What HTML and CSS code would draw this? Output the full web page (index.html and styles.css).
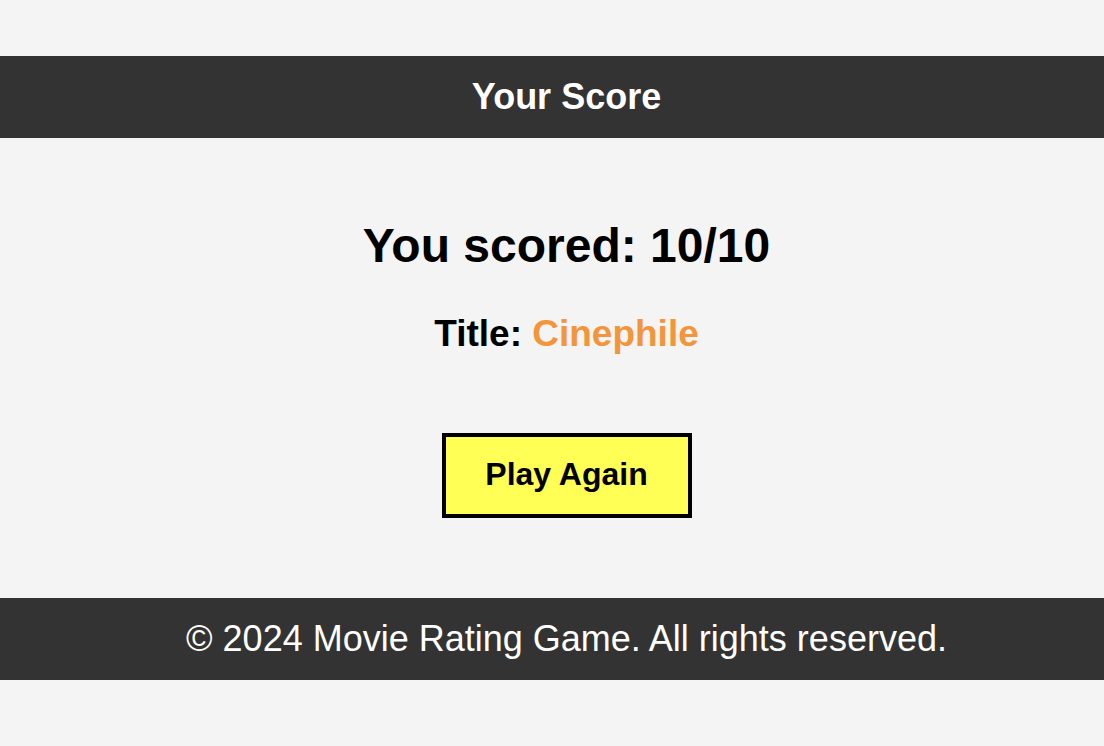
FILE: index.html
```html
<!DOCTYPE html>
<html lang="en">
<head>
<meta charset="utf-8">
<title>Your Score</title>
<link rel="stylesheet" href="styles.css">
</head>
<body>
<div class="page">
  <header class="bar top-bar">
    <h1 class="bar-title">Your Score</h1>
  </header>
  <main class="result">
    <h2 class="score">You scored: 10/10</h2>
    <p class="rank">Title: <span class="rank-name">Cinephile</span></p>
    <button class="play-btn" type="button">Play Again</button>
  </main>
  <footer class="bar bottom-bar">
    <p class="footer-text">© 2024 Movie Rating Game. All rights reserved.</p>
  </footer>
</div>
</body>
</html>
```

FILE: styles.css
```css
html, body {
  margin: 0;
  padding: 0;
}

body {
  background: #f4f4f4;
  font-family: "Liberation Sans", Arial, Helvetica, sans-serif;
  color: #000;
}

.page {
  padding-top: 56px;
}

.bar {
  box-sizing: border-box;
  height: 82px;
  background: #333333;
  color: #ffffff;
  display: flex;
  align-items: center;
  justify-content: center;
  padding-left: 29px;
}

.bar-title {
  margin: 0;
  font-size: 36px;
  font-weight: bold;
  line-height: normal;
}

.result {
  box-sizing: border-box;
  display: flex;
  flex-direction: column;
  align-items: center;
  padding-left: 29px;
}

.score {
  margin: 80px 0 0;
  font-size: 48px;
  font-weight: bold;
  line-height: 55px;
}

.rank {
  margin: 40px 0 0;
  font-size: 37px;
  font-weight: bold;
  line-height: 42px;
}

.rank-name {
  color: #f3953a;
}

.play-btn {
  margin-top: 78px;
  box-sizing: border-box;
  width: 250px;
  height: 85px;
  padding: 19px 0 21px;
  border: 4px solid #000;
  border-radius: 0;
  background: #ffff55;
  color: #000;
  font-family: "Liberation Sans", Arial, Helvetica, sans-serif;
  font-size: 32px;
  font-weight: bold;
  line-height: 37px;
  text-align: center;
  cursor: pointer;
}

.bottom-bar {
  margin-top: 80px;
}

.footer-text {
  margin: 0;
  font-size: 36px;
  line-height: normal;
}
```
